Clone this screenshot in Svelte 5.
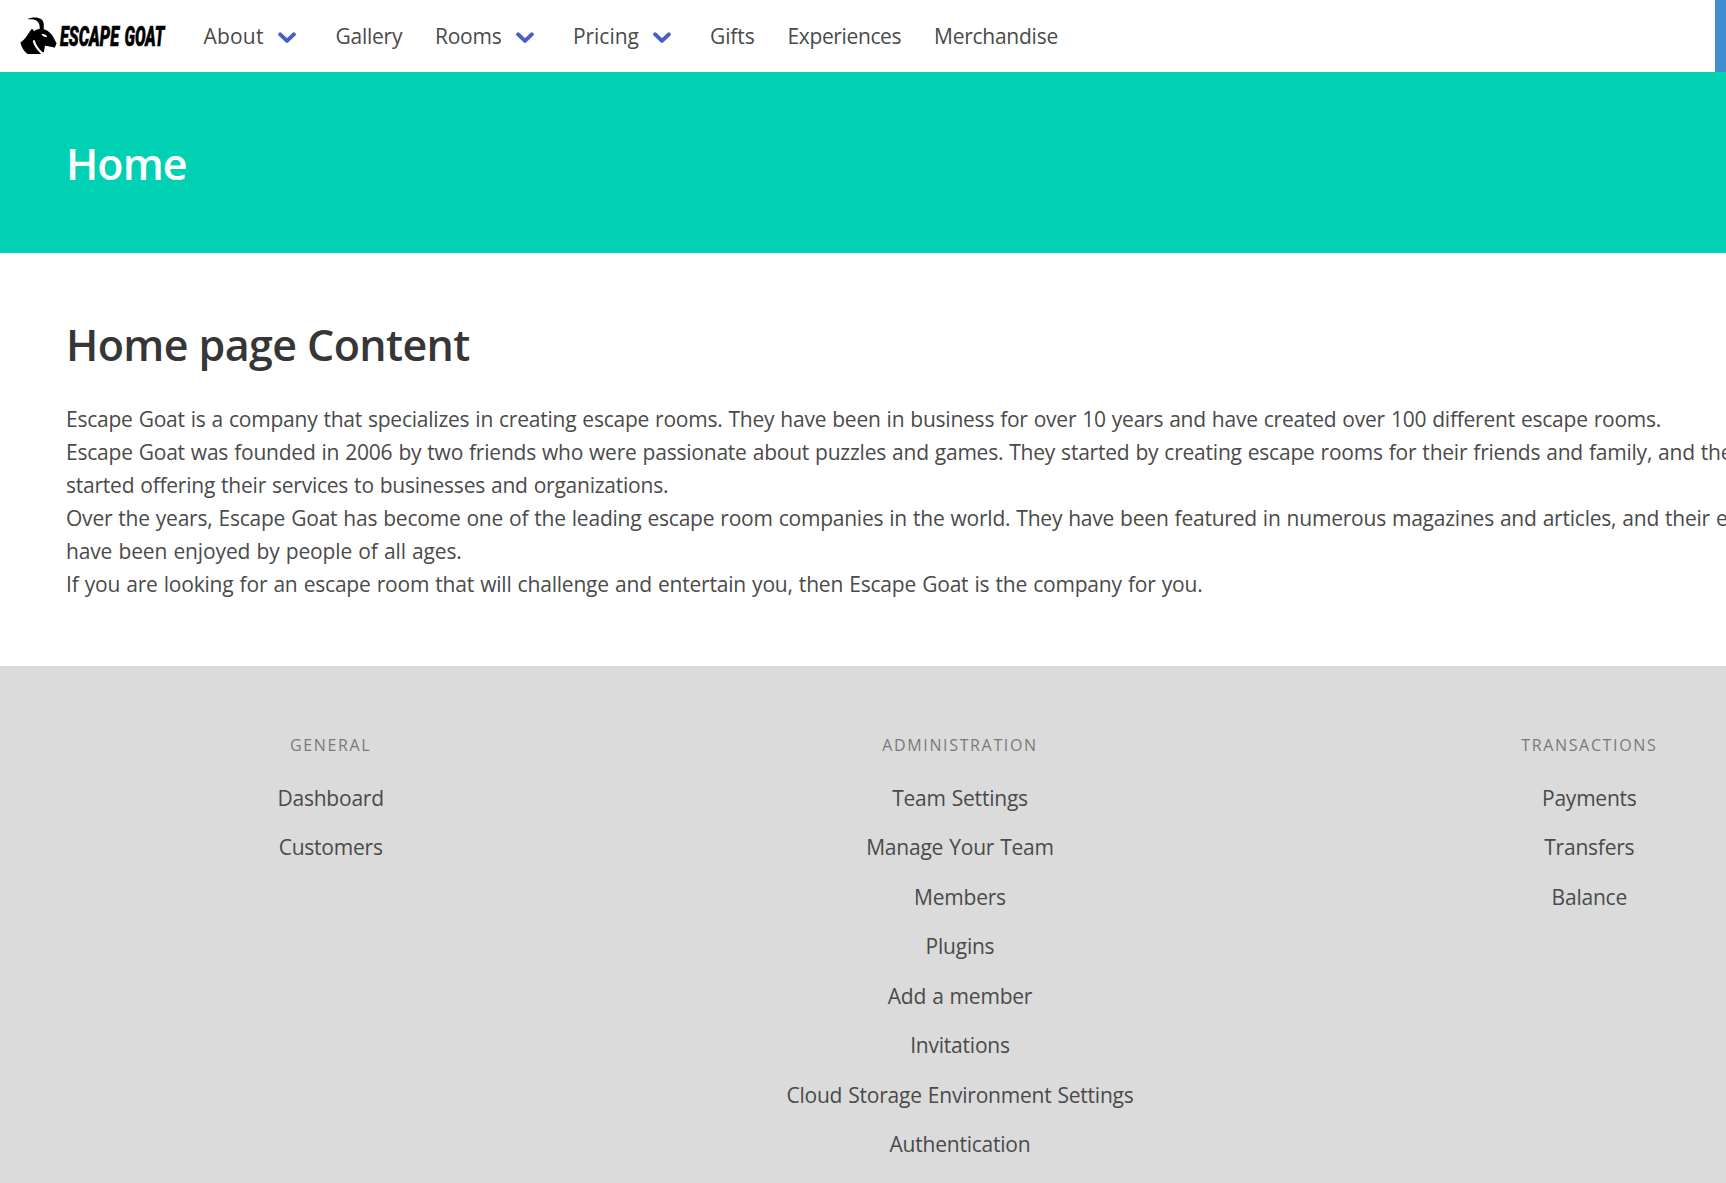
<script>
  const nav = [
    { label: 'About', menu: true, size: 'w-about' },
    { label: 'Gallery', size: 'w-gallery' },
    { label: 'Rooms', menu: true, size: 'w-rooms' },
    { label: 'Pricing', menu: true, size: 'w-pricing' },
    { label: 'Gifts', size: 'w-gifts' },
    { label: 'Experiences', size: 'w-experiences' },
    { label: 'Merchandise', size: 'w-merchandise' }
  ];

  const lines = [
    'Escape Goat is a company that specializes in creating escape rooms. They have been in business for over 10 years and have created over 100 different escape rooms.',
    'Escape Goat was founded in 2006 by two friends who were passionate about puzzles and games. They started by creating escape rooms for their friends and family, and then',
    'started offering their services to businesses and organizations.',
    'Over the years, Escape Goat has become one of the leading escape room companies in the world. They have been featured in numerous magazines and articles, and their escape rooms',
    'have been enjoyed by people of all ages.',
    'If you are looking for an escape room that will challenge and entertain you, then Escape Goat is the company for you.'
  ];

  const groups = [
    { title: 'General', links: ['Dashboard', 'Customers'] },
    {
      title: 'Administration',
      links: ['Team Settings', 'Manage Your Team', 'Members', 'Plugins', 'Add a member', 'Invitations', 'Cloud Storage Environment Settings', 'Authentication']
    },
    { title: 'Transactions', links: ['Payments', 'Transfers', 'Balance'] }
  ];
</script>

<div class="page">
  <nav class="navbar">
    <a class="brand" href="#home" aria-label="Escape Goat">
      <svg width="147" height="40" viewBox="0 0 147 40">
        <path d="M7.4 3.2C11 .9 18 .8 21.300 3.2C24 5.200 24 9 23.700 13.200C28 14.500 32.500 18 34 22.500L36.600 27.200L34.800 31.800C31.500 30.400 27.500 30.400 25 29.800L23.900 36L20.500 38H7.600C4 35.500 1.200 31 .4 26.600C5.500 23.500 7.800 17.500 12 12.700L14.200 15.200L16 13.800L19.700 13C20 9 19 5.200 15 3.900C12.500 3.100 9.500 3.200 7.400 3.200Z" />
        <path class="slash" d="M13.900 25.200C15.200 30 18.500 34 22.400 37.600" />
        <path class="eye" d="M21.500 18.300C24 17.500 26.300 19 27.200 20.700C24.900 21.600 23 20.800 21.500 18.300Z" />
        <text x="40" y="29.700" textLength="59" lengthAdjust="spacingAndGlyphs">ESCAPE</text>
        <text x="104.500" y="29.700" textLength="40" lengthAdjust="spacingAndGlyphs">GOAT</text>
      </svg>
    </a>
    {#each nav as item}
      <a class="item" class:menu={item.menu} href="#nav">
        <span class={item.size}>{item.label}</span>
        {#if item.menu}
          <svg class="chevron" width="18" height="12" viewBox="0 0 18 12"><path d="M2.200 2.400L9 8.900L15.800 2.400" /></svg>
        {/if}
      </a>
    {/each}
    <div class="accent"></div>
  </nav>

  <header class="hero"><h1>Home</h1></header>

  <main>
    <h2>Home page Content</h2>
    {#each lines as line}<p>{line}</p>{/each}
  </main>

  <footer>
    {#each groups as group}
      <section>
        <h3>{group.title}</h3>
        <ul>
          {#each group.links as link}<li><a href="#link">{link}</a></li>{/each}
        </ul>
      </section>
    {/each}
  </footer>
</div>

<style>
  :global(body) { overflow: hidden; background: #fff; }
  .page {
    width: 1920px;
    height: 1183px;
    overflow: hidden;
    display: flex;
    flex-direction: column;
    font: 21px/33px "Open Sans", "Noto Sans", sans-serif;
    color: #4a4a4a;
  }
  a { color: inherit; text-decoration: none; }
  .navbar { display: flex; align-items: center; height: 72px; flex: none; letter-spacing: -0.25px; }
  .brand { display: flex; width: 167px; padding-left: 20px; }
  .brand text {
    font: italic 900 27px Roboto, "Liberation Sans", sans-serif;
    letter-spacing: 0;
    fill: #000;
    stroke: #000;
    stroke-width: 0.6px;
  }
  .eye { fill: #fff; }
  .slash { fill: none; stroke: #fff; stroke-width: 2.2px; stroke-linecap: round; }
  .item { display: flex; align-items: center; padding: 0 16.5px; white-space: nowrap; }
  .item.menu { padding-right: 23px; }
  .chevron { margin: 4px 0 0 14px; }
  .chevron path { fill: none; stroke: #485fc7; stroke-width: 4px; stroke-linecap: round; stroke-linejoin: round; }
  .w-about { width: 60.5px; letter-spacing: 0.2px; }
  .w-gallery { width: 66.5px; }
  .w-rooms { width: 66.5px; }
  .w-pricing { width: 65.5px; letter-spacing: -0.05px; }
  .w-gifts { width: 44.5px; letter-spacing: -0.1px; }
  .w-experiences { width: 113.5px; letter-spacing: -0.37px; }
  .w-merchandise { width: 124px; }
  .accent { align-self: stretch; width: 205px; margin-left: auto; background: #3e8ed0; }
  .hero { flex: none; height: 181px; padding: 67px 66px 0; box-sizing: border-box; background: #00d1b2; color: #fff; }
  h1, h2 { margin: 0; font-size: 43px; line-height: 49.5px; font-weight: 600; letter-spacing: -0.6px; }
  h1 { letter-spacing: -0.95px; }
  main { flex: none; height: 413px; padding: 67px 66px 0; box-sizing: border-box; white-space: nowrap; }
  h2 { margin-bottom: 33px; color: #363636; }
  p { margin: 0; letter-spacing: -0.23px; word-spacing: 0.75px; }
  p:nth-of-type(2), p:nth-of-type(4) { letter-spacing: -0.22px; }
  p:nth-of-type(5) { letter-spacing: -0.14px; word-spacing: 0.9px; }
  p:nth-of-type(6) { letter-spacing: -0.2px; word-spacing: 0.85px; }
  footer {
    flex: 1;
    display: grid;
    grid-template-columns: repeat(3, 1fr);
    padding: 67px 16px 0;
    background: #dbdbdb;
    text-align: center;
  }
  h3 {
    margin: 0 0 24px;
    font-size: 16px;
    line-height: 24.75px;
    font-weight: 400;
    letter-spacing: 1.65px;
    text-transform: uppercase;
    color: #7a7a7a;
  }
  ul { display: grid; gap: 16.5px; margin: 0; padding: 0; list-style: none; letter-spacing: -0.22px; word-spacing: 0.8px; }
</style>
